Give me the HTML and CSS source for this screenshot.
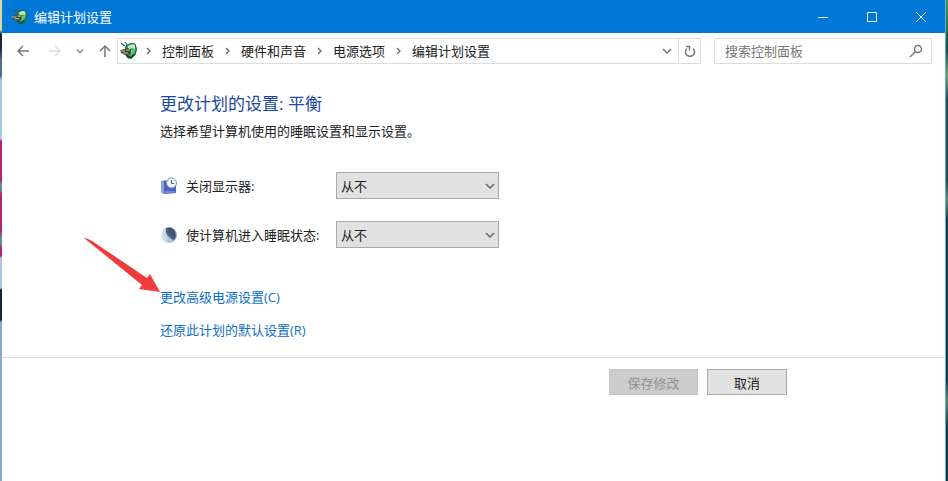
FILE: index.html
```html
<!DOCTYPE html>
<html lang="zh-CN">

<head>
    <meta charset="utf-8">
    <title>编辑计划设置</title>
    <link rel="stylesheet" href="styles.css">
</head>

<body class="desktop">
    <svg class="defs" width="0" height="0">
        <symbol id="powerIcon" viewBox="0 0 18 18">
            <path d="M1 1 L5 4 M5 0 L8 4" stroke="#4a5a50" stroke-width="1.2" />
            <path d="M6 4 Q11 0 15 2 Q18 7 15 13 Q12 17 8 16 Q4 12 6 4Z" fill="#3f9a55" stroke="#1f5a35" />
            <path d="M8 4 Q12 1 15 3 L15 7 Q11 5 8 8Z" fill="#b9eec2" />
            <path d="M11 8 L15 7 L14 12 L11 13Z" fill="#67c97c" />
            <path d="M0 8 L5 7 L8 6 L11 8 L10 12 L5 13 L1 11Z" fill="#39453b" />
            <path d="M0 9 H5 M3 11 H8 M6 8 H10" stroke="#c7c8a0" stroke-width="1.2" />
            <path d="M6 13 L11 16 L14 12" fill="none" stroke="#1d4028" stroke-width="1.5" />
        </symbol>
        <symbol id="chevronDown" viewBox="0 0 10 10">
            <path d="M1 3 L5 7 L9 3" fill="none" stroke="currentColor" stroke-width="1.5" />
        </symbol>
        <symbol id="chevronRight" viewBox="0 0 5 8">
            <path d="M1 1 L4 4 L1 7" fill="none" stroke="currentColor" stroke-width="1.3" />
        </symbol>
    </svg>

    <div class="window">
        <header class="titleBar">
            <svg class="titleIcon"><use href="#powerIcon" /></svg>
            <span class="titleText">编辑计划设置</span>
            <button class="windowButton" aria-label="最小化">
                <svg width="12" height="12"><path d="M1 6.5 H11" /></svg>
            </button>
            <button class="windowButton" aria-label="最大化">
                <svg width="12" height="12"><path d="M1.5 1.5 H10.5 V10.5 H1.5Z" /></svg>
            </button>
            <button class="windowButton" aria-label="关闭">
                <svg width="12" height="12"><path d="M1 1 L11 11 M11 1 L1 11" /></svg>
            </button>
        </header>

        <nav class="navBar">
            <div class="navButtons">
                <button class="navButton" aria-label="后退">
                    <svg width="14" height="14"><path d="M13 7 H2 M7 2 L2 7 L7 12" /></svg>
                </button>
                <button class="navButton navForward" aria-label="前进" disabled>
                    <svg width="14" height="14"><path d="M1 7 H12 M7 2 L12 7 L7 12" /></svg>
                </button>
                <button class="navButton" aria-label="最近">
                    <svg width="8" height="8"><use href="#chevronDown" /></svg>
                </button>
                <button class="navButton" aria-label="向上">
                    <svg width="14" height="14"><path d="M7 13 V2 M2 7 L7 2 L12 7" /></svg>
                </button>
            </div>
            <div class="addressBar">
                <svg class="addressIcon"><use href="#powerIcon" /></svg>
                <svg class="crumbArrow"><use href="#chevronRight" /></svg>
                <a class="crumb" href="#">控制面板</a>
                <svg class="crumbArrow"><use href="#chevronRight" /></svg>
                <a class="crumb" href="#">硬件和声音</a>
                <svg class="crumbArrow"><use href="#chevronRight" /></svg>
                <a class="crumb" href="#">电源选项</a>
                <svg class="crumbArrow"><use href="#chevronRight" /></svg>
                <a class="crumb" href="#">编辑计划设置</a>
                <button class="addressButton addressDrop" aria-label="以前的位置">
                    <svg width="10" height="10"><use href="#chevronDown" /></svg>
                </button>
                <button class="addressButton addressRefresh" aria-label="刷新">
                    <svg width="12" height="13"><path d="M9 3.5 A4.5 4.5 0 1 1 3 3.5 M2 1.5 H5.5 V5.5" /></svg>
                </button>
            </div>
            <div class="searchBox">
                <input class="searchInput" type="text" placeholder="搜索控制面板" aria-label="搜索控制面板">
                <svg class="searchIcon" width="14" height="14"><circle cx="9" cy="5" r="3.5" /><path d="M6 8 L1 13" /></svg>
            </div>
        </nav>

        <main class="content">
            <h1 class="heading">更改计划的设置: 平衡</h1>
            <p class="intro">选择希望计算机使用的睡眠设置和显示设置。</p>

            <div class="settings">
                <svg class="settingIcon" viewBox="0 0 18 18">
                    <path d="M1 4 L10 3 L16 8 V16 L4 17 L1 15Z" fill="#4965c0" />
                    <path d="M1 4 L4 5 V17 L1 15Z" fill="#8fa3e2" />
                    <path d="M5 14 H15 V16 L5 16.5Z" fill="#7188d6" />
                    <circle cx="11.5" cy="6" r="5" fill="#eef3f7" stroke="#8796ae" />
                    <path d="M11.5 3 V6.5 H14" fill="none" stroke="#50627f" />
                </svg>
                <label class="settingLabel" for="display">关闭显示器:</label>
                <div class="selectBox">
                    <select class="select" id="display">
                        <option>从不</option>
                    </select>
                    <svg class="selectArrow"><use href="#chevronDown" /></svg>
                </div>

                <svg class="settingIcon" viewBox="0 0 18 18">
                    <defs>
                        <linearGradient id="moon">
                            <stop offset="0" stop-color="#dce8f3" />
                            <stop offset="1" stop-color="#8eabcb" />
                        </linearGradient>
                        <linearGradient id="moonShade" x1="1" x2="0" y1="0" y2="1">
                            <stop offset="0" stop-color="#334460" />
                            <stop offset="1" stop-color="#5d7392" />
                        </linearGradient>
                    </defs>
                    <circle cx="9" cy="9" r="8" fill="url(#moon)" />
                    <path d="M6 2 Q13 0 15 6 Q17 11 14 14 Q12 14 9 11 Q5 8 6 2Z" fill="url(#moonShade)" />
                </svg>
                <label class="settingLabel" for="sleep">使计算机进入睡眠状态:</label>
                <div class="selectBox">
                    <select class="select" id="sleep">
                        <option>从不</option>
                    </select>
                    <svg class="selectArrow"><use href="#chevronDown" /></svg>
                </div>
            </div>

            <div class="links">
                <div class="advanced">
                    <a class="link" href="#">更改高级电源设置(C)</a>
                    <svg class="pointer" viewBox="0 0 76 54">
                        <path d="M0 0 Q3 0 8 3 L63 40 L66 36 L76 54 L55 51 L58 47 Z" fill="#f03c3c" />
                    </svg>
                </div>
                <a class="link" href="#">还原此计划的默认设置(R)</a>
            </div>
        </main>

        <footer class="footer">
            <button class="button saveButton" disabled>保存修改</button>
            <button class="button cancelButton">取消</button>
        </footer>
    </div>
</body>

</html>
```

FILE: styles.css
```css
* {
    box-sizing: border-box;
}

.desktop {
    display: flex;
    min-height: 100vh;
    margin: 0;
    padding: 0 2px;
    font-family: "Open Sans", "Noto Sans CJK SC", sans-serif;
    font-size: 13px;
    line-height: 20px;
    color: #222;
    /* wallpaper showing on both sides of the window */
    background:
        linear-gradient(#d5dc9a 0 30px, #152540 34px 48px, #526c8c 60px 76px, #a5c8e8 80px 139px, #b02a68 141px 180px, #5a8fa0 184px 190px, #b02a68 194px 232px, #5a8fa0 238px 244px, #b02a68 248px 256px, #a5c8e8 258px 288px, #10223c 290px 320px, #86a9ce 322px) left / 2px 100% no-repeat,
        linear-gradient(#4f8f4a, #174c3f 50px, #76a860 75px, #1d4b48 100px 180px, #5a8f68 200px, #123c40 220px 380px, #5a8a60 400px, #12343c 430px) right / 2px 100% no-repeat;
}

.defs {
    position: absolute;
}

.window {
    flex: 1;
    background-color: #fff;
    border-right: 1px solid #58b4dc;
}

button {
    font-family: inherit;
    font-size: inherit;
}

.titleBar {
    display: flex;
    align-items: center;
    height: 33px;
    padding-left: 10px;
    background-color: #0078d7;
    color: #fff;
}

.titleIcon {
    width: 16px;
    height: 16px;
}

.titleText {
    flex: 1;
    margin-left: 6px;
}

.windowButton {
    width: 49px;
    height: 33px;
    padding: 0;
    border: 0;
    background: none;
}

.windowButton svg,
.navButton svg,
.addressButton svg {
    display: block;
    margin: auto;
    fill: none;
    stroke: #fff;
    stroke-width: 1;
}

.navBar {
    display: flex;
    align-items: center;
    padding: 5px 13px 5px 14px;
}

.navButtons {
    display: flex;
    align-items: center;
    gap: 14px;
    width: 101px;
}

.navButton {
    padding: 0;
    border: 0;
    background: none;
    color: #777;
}

.navButton svg,
.addressButton svg {
    stroke: #777;
    stroke-width: 1.5;
}

.navForward {
    margin-left: 4px;
}

.navForward svg {
    stroke: #ddd;
}

.addressBar {
    display: flex;
    flex: 1;
    align-items: center;
    height: 26px;
    border: 1px solid #ddd;
}

.addressIcon {
    width: 18px;
    height: 18px;
    margin-left: 2px;
}

.crumbArrow {
    width: 5px;
    height: 8px;
    margin: 0 11px;
    color: #666;
}

.addressIcon + .crumbArrow {
    margin-left: 8px;
}

.crumb {
    color: #222;
    text-decoration: none;
}

.addressButton {
    width: 22px;
    height: 24px;
    padding: 0;
    border: 0;
    background: none;
    color: #777;
}

.addressDrop {
    margin-left: auto;
}

.addressRefresh {
    border-left: 1px solid #ddd;
}

.searchBox {
    display: flex;
    align-items: center;
    width: 218px;
    height: 26px;
    margin-left: 13px;
    padding: 0 8px 0 10px;
    border: 1px solid #ddd;
}

.searchInput {
    flex: 1;
    min-width: 0;
    padding: 0;
    border: 0;
    outline: 0;
    font: inherit;
}

.searchInput::placeholder {
    color: #777;
}

.searchIcon {
    fill: none;
    stroke: #777;
    stroke-width: 1.5;
}

.content {
    padding: 20px 158px 17px;
}

.heading {
    margin: 0;
    font-size: 17px;
    font-weight: normal;
    line-height: 30px;
    color: #1c4aa0;
}

.intro {
    margin: 2px 0 31px;
}

.settings {
    display: grid;
    grid-template-columns: 18px 158px 163px;
    grid-auto-rows: 27px;
    align-items: center;
    row-gap: 22px;
}

.settingIcon {
    width: 18px;
    height: 18px;
}

.settingLabel {
    padding-left: 8px;
    white-space: nowrap;
}

.selectBox {
    position: relative;
}

.select {
    display: block;
    width: 100%;
    height: 27px;
    padding: 0 4px;
    border: 1px solid #aaa;
    border-radius: 0;
    appearance: none;
    background-color: #e1e1e1;
    font: inherit;
    color: #222;
}

.selectArrow {
    position: absolute;
    top: 9px;
    right: 4px;
    width: 10px;
    height: 10px;
    color: #666;
    pointer-events: none;
}

.links {
    display: flex;
    flex-direction: column;
    align-items: flex-start;
    gap: 13px;
    margin-top: 39px;
}

.advanced {
    position: relative;
}

.link {
    color: #0f6fc6;
    text-decoration: none;
}

/* red arrow pointing at the advanced settings link */
.pointer {
    position: absolute;
    right: 100%;
    bottom: 15px;
    width: 76px;
    height: 54px;
}

.footer {
    display: flex;
    justify-content: flex-end;
    gap: 9px;
    padding: 11px 158px;
    border-top: 1px solid #ddd;
}

.button {
    height: 26px;
    padding: 0;
    border: 1px solid #aaa;
    background-color: #e1e1e1;
    color: #222;
}

.saveButton {
    width: 89px;
    border-color: #c4c4c4;
    background-color: #ccc;
    color: #929292;
}

.cancelButton {
    width: 80px;
}
```
